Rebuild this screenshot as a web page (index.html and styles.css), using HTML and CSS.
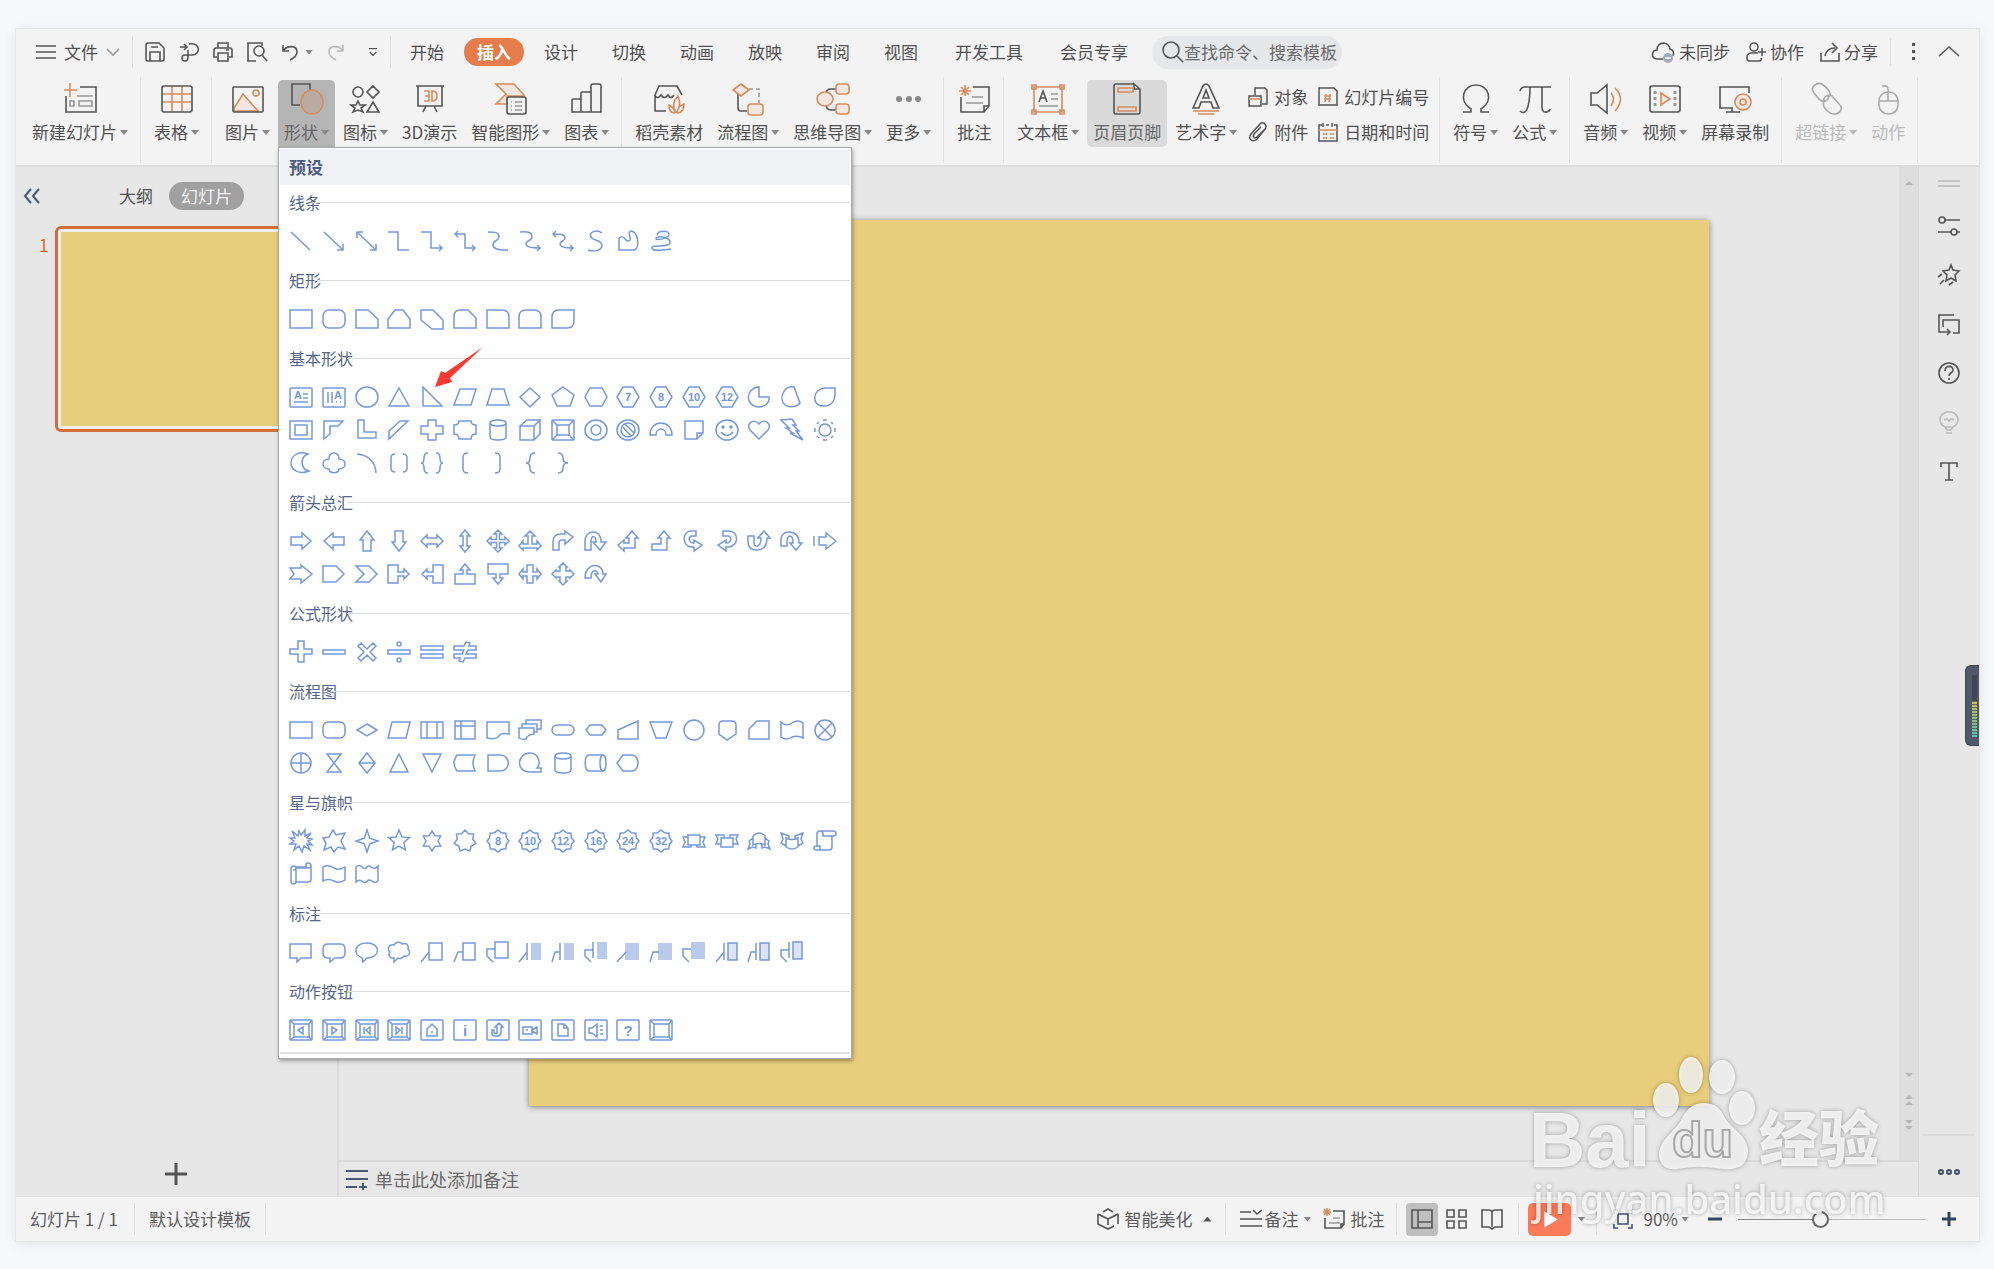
FILE: index.html
```html
<!DOCTYPE html>
<html lang="zh-CN">
<head>
<meta charset="utf-8">
<title>演示文稿</title>
<link rel="stylesheet" href="styles.css">
</head>
<body>
<div class="window">
  <header class="topbar">
    <div class="top-group file-group">
      <button class="plain file"><svg class="s20" viewBox="0 0 20 20"><path d="M0 4H20M0 10H20M0 16H20"/></svg>文件<svg class="chev" viewBox="0 0 14 10"><path d="M1 2L7 8L13 2"/></svg></button>
    </div>
    <div class="top-group quick">
      <button class="plain" aria-label="保存"><svg class="s20" viewBox="0 0 20 20"><path d="M1 3Q1 1 3 1H14L19 6V17Q19 19 17 19H3Q1 19 1 17ZM5 19V10H15V19M6 5H13"/></svg></button>
      <button class="plain" aria-label="输出"><svg class="s20" viewBox="0 0 20 20"><path d="M1 5H8M5 2L8 5L5 8M10 2C22 0 22 13 13 13H6C2 13 2 19 6 19C9 19 9 17 9 14V8"/></svg></button>
      <button class="plain" aria-label="打印"><svg class="s20" viewBox="0 0 20 20"><path d="M5 6V1H15V6M4 15H1V8Q1 6 3 6H17Q19 6 19 8V15H16M5 11H15V19H5ZM13 8H16"/></svg></button>
      <button class="plain" aria-label="打印预览"><svg class="s20" viewBox="0 0 20 20"><path d="M9 19H1V1H15V4M15 13L20 19"/><circle cx="12" cy="9" r="5"/></svg></button>
      <button class="plain undo" aria-label="撤销"><svg class="s18" viewBox="0 0 18 18"><path d="M2 2V8H8M2 8C6 2 16 2 16 9C16 13 13 15 9 17"/></svg><i class="caret"></i></button>
      <button class="plain faint" aria-label="恢复" disabled><svg class="s18" viewBox="0 0 18 18"><path d="M16 2V8H10M16 8C12 2 2 2 2 9C2 13 5 15 9 17"/></svg></button>
      <button class="plain more-quick" aria-label="自定义"><svg class="s10" viewBox="0 0 10 12"><path d="M0 2H10M1 6L5 10L9 6"/></svg></button>
    </div>
    <nav class="tabs">
      <button class="tab">开始</button><button class="tab active">插入</button><button class="tab">设计</button><button class="tab">切换</button><button class="tab">动画</button><button class="tab">放映</button><button class="tab">审阅</button><button class="tab">视图</button><button class="tab wide">开发工具</button><button class="tab wide">会员专享</button>
    </nav>
    <label class="search"><svg class="s22" viewBox="0 0 22 22"><circle cx="9" cy="9" r="8"/><path d="M15 15L21 21"/></svg><input type="text" placeholder="查找命令、搜索模板" aria-label="搜索"></label>
    <div class="account">
      <button class="plain"><svg class="s24" viewBox="0 0 24 24"><path d="M12 19H6C-1 18 1 10 6 10C6 1 18 1 19 9C23 10 23 14 22 16"/><circle cx="17" cy="18" r="5" fill="#a3aabb" stroke="none"/><path d="M14 18H20" stroke="#fff"/></svg>未同步</button>
      <button class="plain"><svg class="s20" viewBox="0 0 20 20"><circle cx="8" cy="5" r="4"/><path d="M12 11H5Q1 11 1 16Q1 19 3 19H13Q16 19 15 16M16 6V14M12 10H20"/></svg>协作</button>
      <button class="plain"><svg class="s20" viewBox="0 0 20 20"><path d="M1 11V19H19V11M5 14C6 8 10 6 15 6M12 1L17 6L12 11"/></svg>分享</button>
      <span class="bar"></span>
      <button class="plain dots-v" aria-label="更多"><svg class="s20" viewBox="0 0 20 20"><path class="ink" d="M9 1h3v3H9zM9 8h3v3H9zM9 15h3v3H9z"/></svg></button>
      <button class="plain" aria-label="折叠功能区"><svg class="s20" viewBox="0 0 20 20"><path d="M0 14L10 5L20 14"/></svg></button>
    </div>
  </header>

  <div class="ribbon">
    <div class="group g-first">
      <button class="tool"><svg viewBox="0 0 34 32"><path d="M17 4H33V29H3V13"/><path class="or" d="M7 0V14M1 7H14"/><path class="gr" d="M14 13H30M7 18H11V23H7ZM16 18H29V23H16Z"/></svg><span>新建幻灯片<i class="caret"></i></span></button>
    </div>
    <div class="group">
      <button class="tool"><svg viewBox="0 0 34 32"><path class="or" d="M12 3V29M22 3V29M2 11H32M2 19H32"/><rect x="2" y="3" width="30" height="26" rx="2"/></svg><span>表格<i class="caret"></i></span></button>
    </div>
    <div class="group">
      <button class="tool"><svg viewBox="0 0 34 32"><path class="orf" d="M3 28V25L12 11L27 28Z"/><circle class="or" cx="25" cy="10" r="3"/><rect x="2" y="4" width="30" height="25" rx="1"/></svg><span>图片<i class="caret"></i></span></button>
      <div class="menu-anchor">
        <button class="tool pressed" aria-expanded="true"><svg viewBox="0 0 34 32"><path d="M10 22H2V1H20V8"/><ellipse class="orf deep" cx="22" cy="19" rx="11" ry="12"/></svg><span>形状<i class="caret"></i></span></button>
        <div class="gallery" id="gallery">
          <h2>预设</h2>
          <svg class="pointer" viewBox="0 0 48 40"><path fill="#fb3a36" d="M48 0L15 31L17 35L0 40L6 24L10 26Z"/></svg>
        </div>
      </div>
      <button class="tool"><svg viewBox="0 0 34 32"><circle cx="9" cy="9" r="5"/><path d="M24 3L30 9L24 15L18 9ZM9 18L11 22L16 22L12 25L14 29L9 27L4 29L6 25L2 22L7 22ZM24 19L30 29H18Z"/></svg><span>图标<i class="caret"></i></span></button>
      <button class="tool"><svg viewBox="0 0 34 32"><path d="M3 3H31M5 3V23H29V3M13 23L10 29M21 23L24 29"/><path class="or" d="M11 8H16V18H11M12 13H16M19 8Q24 8 24 13Q24 18 19 18Z"/></svg><span>3D演示</span></button>
      <button class="tool"><svg viewBox="0 0 34 32"><path class="orf" d="M2 1H20L30 12V13H13V21H2L12 11Z"/><rect class="paper" x="13" y="14" width="19" height="17" rx="2"/><path class="gr" d="M17 19H18M21 19H28M17 23H18M21 23H28M17 27H18M21 27H28"/></svg><span>智能图形<i class="caret"></i></span></button>
      <button class="tool"><svg viewBox="0 0 34 32"><path d="M2 29V17Q2 16 3 16H11V29ZM11 29V10Q11 9 12 9H21V29ZM21 29V3Q21 1 23 1H29Q31 1 31 3V29Z"/></svg><span>图表<i class="caret"></i></span></button>
    </div>
    <div class="group">
      <button class="tool"><svg viewBox="0 0 34 32"><path d="M3 12L7 3H25L30 12M3 12V28H14M3 12Q5 17 9 12Q12 17 16 12Q19 17 22 12"/><path class="or" d="M24 30C19 22 22 17 26 13C29 20 28 25 24 30M23 30C18 30 17 26 17 22Q22 24 23 30M25 30Q26 23 32 21C32 27 30 30 25 30"/></svg><span>稻壳素材</span></button>
      <button class="tool"><svg viewBox="0 0 34 32"><path d="M7 11V25Q7 28 10 28H16"/><path class="gr" stroke-dasharray="4 3" d="M18 6H28V20"/><path class="orf" d="M10 1L18 7L10 13L2 7Z"/><rect class="orf" x="17" y="21" width="15" height="11" rx="3"/></svg><span>流程图<i class="caret"></i></span></button>
      <button class="tool"><svg viewBox="0 0 34 32"><path d="M20 6H15Q10 6 10 11M10 21Q10 27 15 27H20"/><ellipse class="orf" cx="9" cy="16" rx="8" ry="7"/><rect class="orf" x="20" y="1" width="13" height="10" rx="3"/><rect class="orf" x="20" y="21" width="13" height="10" rx="3"/></svg><span>思维导图<i class="caret"></i></span></button>
      <button class="tool"><svg viewBox="0 0 34 32"><g fill="#888" stroke="none"><circle cx="7" cy="16" r="3"/><circle cx="17" cy="16" r="3"/><circle cx="26" cy="16" r="3"/></g></svg><span>更多<i class="caret"></i></span></button>
    </div>
    <div class="group">
      <button class="tool"><svg viewBox="0 0 34 32"><path d="M16 4H32V23L27 29H4V14M32 23H27V29"/><path class="gr" d="M15 14H26M9 20H26"/><path class="or" d="M8 2V13M2 8H14M4 4L12 12M12 4L4 12"/></svg><span>批注</span></button>
    </div>
    <div class="group g-text">
      <button class="tool"><svg viewBox="0 0 34 32"><path class="or" d="M3 4H31V29H3ZM1 2H5V6H1ZM29 2H33V6H29ZM1 27H5V31H1ZM29 27H33V31H29Z"/><path d="M8 19L12 8L16 19M9 15H15"/><path class="gr" d="M20 11H27M20 16H27M8 23H27"/></svg><span>文本框<i class="caret"></i></span></button>
      <button class="tool hover"><svg viewBox="0 0 34 32"><path d="M24 1H6Q4 1 4 3V29Q4 31 6 31H28Q30 31 30 29V6L24 1V6H30"/><path class="or" d="M8 5H23V9H8ZM8 24H26V28H8Z"/></svg><span>页眉页脚</span></button>
      <button class="tool"><svg viewBox="0 0 34 32"><path d="M4 25L14 3Q17 -1 20 3L30 25H24L22 19H12L10 25ZM14 15L17 7L20 15Z"/><path class="or" d="M4 28H30M9 31H25"/></svg><span>艺术字<i class="caret"></i></span></button>
      <div class="minis">
        <button class="mini"><svg class="s20" viewBox="0 0 20 20"><path d="M7 8V1H17L19 3V17H14"/><path d="M1 9H13V19H1Z"/><path class="or" d="M1 12H13"/></svg>对象</button>
        <button class="mini"><svg class="s20" viewBox="0 0 20 20"><path d="M18 6L9 17C5 21 -1 17 3 12L12 2C15 -1 20 3 17 7L9 15C7 17 4 15 6 12L13 5"/></svg>附件</button>
      </div>
      <div class="minis later">
        <button class="mini"><svg class="s20" viewBox="0 0 20 20"><path d="M16 1H1V18H19V4Z"/><path class="or" d="M8 7L7 15M12 7L11 15M6 9H13M6 12H13"/></svg>幻灯片编号</button>
        <button class="mini"><svg class="s20" viewBox="0 0 20 20"><path d="M4 3H1V19H19V3H16M5 1V5M14 1V5M8 3H11"/><path class="or" d="M1 8H19M5 12H9M12 12H16M5 16H9M12 16H16"/></svg>日期和时间</button>
      </div>
    </div>
    <div class="group">
      <button class="tool"><svg viewBox="0 0 34 32"><path d="M4 29H12V26C-1 18 4 2 17 2C30 2 35 18 22 26V29H30"/></svg><span>符号<i class="caret"></i></span></button>
      <button class="tool"><svg viewBox="0 0 34 32"><path d="M2 8Q3 4 7 4H33M12 4Q12 22 8 28Q5 31 2 28M24 4V24Q24 30 29 29Q32 28 32 26"/></svg><span>公式<i class="caret"></i></span></button>
    </div>
    <div class="group">
      <button class="tool"><svg viewBox="0 0 34 32"><path d="M2 10H8L18 2V30L8 22H2Z"/><path class="or" d="M22 10Q27 16 22 23M26 5Q37 16 26 28"/></svg><span>音频<i class="caret"></i></span></button>
      <button class="tool"><svg viewBox="0 0 34 32"><rect x="2" y="3" width="30" height="26" rx="2"/><path stroke-dasharray="3 3" stroke-width="3" class="gr" d="M7 8V25M27 8V25"/><path class="orf" d="M13 10L22 16L13 22Z"/></svg><span>视频<i class="caret"></i></span></button>
      <button class="tool"><svg viewBox="0 0 34 32"><path d="M15 25H2V4H31V10M14 25V29M8 29H22"/><circle class="orf" cx="25" cy="19" r="8"/><circle class="or" cx="25" cy="19" r="3"/></svg><span>屏幕录制</span></button>
    </div>
    <div class="group">
      <button class="tool" disabled><svg viewBox="0 0 34 32"><path d="M15 19C12 23 20 31 25 31C31 31 35 25 30 21L24 14C21 10 14 13 15 18M20 14C24 10 17 4 13 1C9 -1 0 3 5 10L10 16C13 20 21 18 19 13"/></svg><span>超链接<i class="caret"></i></span></button>
      <button class="tool" disabled><svg viewBox="0 0 34 32"><rect x="8" y="9" width="19" height="22" rx="9"/><path d="M8 18H27M17 18V8Q18 2 11 3"/></svg><span>动作</span></button>
    </div>
  </div>

  <main class="work">
    <aside class="outline">
      <div class="outline-tabs">
        <button class="plain collapse" aria-label="收起"><svg class="s16" viewBox="0 0 16 16"><path d="M7 1L1 8L7 15M15 1L9 8L15 15"/></svg></button>
        <button class="plain">大纲</button>
        <button class="slides-tab">幻灯片</button>
      </div>
      <div class="thumb-row"><span class="num">1</span><button class="thumb" aria-label="幻灯片 1"></button></div>
      <button class="plain add" aria-label="新建幻灯片"><svg class="s22" viewBox="0 0 22 22"><path d="M11 0V22M0 11H22"/></svg></button>
    </aside>
    <section class="editor">
      <div class="stage"><div class="canvas"><div class="slide"></div></div>
        <div class="scroll">
          <svg class="s10" viewBox="0 0 10 10"><path d="M1 7L5 3L9 7Z"/></svg>
          <span class="grow"></span>
          <svg class="s10" viewBox="0 0 10 10"><path d="M1 3L5 7L9 3Z"/></svg>
          <svg class="s10" viewBox="0 0 10 10"><path d="M1 4L5 0L9 4ZM1 10L5 6L9 10Z"/></svg>
          <svg class="s10" viewBox="0 0 10 10"><path d="M1 0L5 4L9 0ZM1 6L5 10L9 6Z"/></svg>
        </div>
      </div>
      <label class="notes"><svg class="s22" viewBox="0 0 22 22"><path d="M0 3H22M0 11H22M0 19H11M17 15V22M13 19H21"/></svg><input type="text" placeholder="单击此处添加备注" aria-label="备注"></label>
    </section>
    <aside class="side">
      <svg class="s22 grip" viewBox="0 0 22 22"><path d="M0 8H22M0 13H22"/></svg>
      <button class="plain" aria-label="对象属性"><svg class="s22" viewBox="0 0 22 22"><circle cx="4" cy="5" r="3"/><circle cx="16" cy="17" r="3"/><path d="M7 5H22M0 17H13M19 17H22"/></svg></button>
      <button class="plain" aria-label="动画"><svg class="s22" viewBox="0 0 22 22"><path d="M13 1L15 6L21 7L17 11L18 17L13 14L8 17L9 11L5 7L11 6ZM0 13L4 10M2 20L6 16M11 21L15 18"/></svg></button>
      <button class="plain" aria-label="切换"><svg class="s22" viewBox="0 0 22 22"><path d="M16 2H1V19H12M9 16L12 19L9 22M5 14V7H21V20H15"/></svg></button>
      <button class="plain" aria-label="帮助"><svg class="s22" viewBox="0 0 22 22"><circle cx="11" cy="11" r="10"/><path d="M7 9C7 3 15 3 15 8C15 11 11 11 11 14M11 16V18"/></svg></button>
      <button class="plain faint" aria-label="提示"><svg class="s22" viewBox="0 0 22 22"><path d="M7 16Q2 13 2 9C2 -2 20 -2 20 9Q20 13 15 16L13 19H9ZM7 16H15M8 22H14M6 9L9 8L11 10L13 8L16 9"/></svg></button>
      <button class="plain" aria-label="文字"><svg class="s22" viewBox="0 0 22 22"><path d="M3 7V3H19V7M11 3V20M7 20H15"/></svg></button>
      <span class="grow"></span>
      <button class="plain side-more" aria-label="更多"><svg class="s24" viewBox="0 0 24 24"><circle cx="4" cy="12" r="2"/><circle cx="12" cy="12" r="2"/><circle cx="20" cy="12" r="2"/></svg></button>
    </aside>
  </main>

  <footer class="status">
    <span class="cell first">幻灯片 1 / 1</span>
    <span class="cell">默认设计模板</span>
    <span class="grow"></span>
    <button class="cell beautify"><svg class="s22" viewBox="0 0 22 22"><path d="M6 4L11 1L16 4M1 6L11 11L21 6M1 6V16L11 21L17 18M11 11V17M21 6V16"/></svg>智能美化<i class="caret up"></i></button>
    <div class="cell remarks">
      <button class="plain"><svg class="s22" viewBox="0 0 22 22"><path d="M0 4H11M0 11H22M0 18H22M13 2L17 6L22 2"/></svg>备注<i class="caret"></i></button>
      <button class="plain"><svg class="s22" viewBox="0 0 22 22"><path d="M10 3H21V16L18 20H2V10M21 16H18V20"/><path class="gr" d="M10 10H17M6 15H17"/><path class="or" d="M4 0V8M0 4H8M1 1L7 7M7 1L1 7"/></svg>批注</button>
    </div>
    <div class="cell views">
      <button class="view on" aria-label="普通视图"><svg class="s22" viewBox="0 0 22 22"><path d="M1 2H21V20H1ZM7 2V20M7 14H21"/></svg></button>
      <button class="view" aria-label="浏览视图"><svg class="s22" viewBox="0 0 22 22"><path d="M1 2H8V9H1ZM13 2H20V9H13ZM1 13H8V20H1ZM13 13H20V20H13Z"/></svg></button>
      <button class="view" aria-label="阅读视图"><svg class="s22" viewBox="0 0 22 22"><path d="M11 4Q10 2 8 2H1V19H8L11 21L14 19H21V2H14Q12 2 11 4V19"/></svg></button>
    </div>
    <div class="cell play"><button class="play-btn" aria-label="播放"><svg viewBox="0 0 42 32"><path fill="#fff" stroke="none" d="M16 8L29 16L16 24Z"/></svg></button><i class="caret"></i></div>
    <div class="zoom">
      <button class="plain" aria-label="适应窗口"><svg class="s20 navy" viewBox="0 0 20 20"><path d="M1 5V1H5M15 1H19V5M19 15V19H15M5 19H1V15M5 5H15V15H5Z"/></svg></button>
      <button class="plain pct">90%<i class="caret"></i></button>
      <button class="plain" aria-label="缩小"><svg class="s16 bold" viewBox="0 0 16 16"><path d="M1 8H15"/></svg></button>
      <input type="range" min="0" max="100" value="43" aria-label="缩放">
      <button class="plain" aria-label="放大"><svg class="s16 bold" viewBox="0 0 16 16"><path d="M1 8H15M8 1V15"/></svg></button>
    </div>
  </footer>

  <div class="meter"><span></span></div>
  <svg class="watermark" viewBox="0 0 370 180">
    <g fill="#fff" opacity=".8">
      <text class="wm-bai" x="4" y="117">Bai</text>
      <ellipse cx="141" cy="50" rx="13" ry="17"/><ellipse cx="166" cy="25" rx="12" ry="18"/><ellipse cx="197" cy="27" rx="13" ry="17"/><ellipse cx="217" cy="58" rx="13" ry="17"/>
      <path d="M178 53C166 53 160 62 155 72C149 82 134 90 134 105C135 117 143 120 152 119C162 118 170 116 178 117C188 117 196 120 206 119C218 118 223 111 223 100C222 86 207 79 200 68C195 58 190 53 178 53Z"/>
      <text class="wm-du" x="147" y="107">du</text>
      <text class="wm-cn" x="234" y="111">经验</text>
      <text class="wm-url" x="8" y="164">jingyan.baidu.com</text>
    </g>
  </svg>
</div>
<script src="shapes.js"></script>
</body>
</html>
```

FILE: styles.css
```css
* { box-sizing: border-box; }
body {
  margin: 0;
  padding: 29px 15px 28px 16px;
  min-height: 100vh;
  display: flex;
  background: #f7f8fa;
  font: 17px/24px "Noto Sans CJK SC", "Noto Sans", sans-serif;
  color: #505050;
}
button, input { font: inherit; color: inherit; margin: 0; }
button { border: 0; padding: 0; background: none; white-space: nowrap; }
svg { display: block; flex: none; fill: none; stroke: #555; stroke-width: 2; overflow: visible; }
.grow { flex: 1; }
.s10 { width: 10px; height: 10px; }
.s16 { width: 16px; height: 16px; }
.s18 { width: 18px; height: 18px; }
.s20 { width: 20px; height: 20px; }
.s22 { width: 22px; height: 22px; }
.s24 { width: 24px; height: 24px; }
.or { stroke: #d58d60; }
.orf { stroke: #d58d60; fill: #f1e6e0; }
.deep { fill: #b9aaa2; }
.gr { stroke: #999; }
.ink { fill: #555; stroke: none; }
.paper { fill: #f3f3f3; }
.caret {
  display: inline-block;
  width: 8px;
  height: 5px;
  margin-left: 3px;
  background: #888;
  clip-path: polygon(0 0, 100% 0, 50% 100%);
}
.caret.up { background: #555; clip-path: polygon(0 100%, 50% 0, 100% 100%); }
.plain { display: flex; align-items: center; }

.window {
  position: relative;
  flex: 1;
  min-width: 0;
  display: flex;
  flex-direction: column;
  background: #f3f3f3;
  box-shadow: 0 0 0 1px #e6e6e7, 0 2px 12px #0000001a;
}

/* Menu bar */
.topbar { display: flex; align-items: center; height: 48px; padding-bottom: 2px; }
.topbar svg { stroke-width: 1.6; }
.top-group { display: flex; align-items: center; height: 32px; border-right: 1px solid #dedede; }
.file-group { padding: 0 12px 0 20px; }
.file { gap: 8px; }
.chev { width: 14px; height: 10px; stroke: #999; }
.quick { gap: 14px; padding: 0 12px; }
.undo .caret { margin-left: 6px; }
.faint svg { stroke: #bbb; }
.more-quick { margin-left: 9px; }
.tabs { display: flex; gap: 6px; padding-left: 5px; }
.tab { height: 28px; padding: 0 14px; border-radius: 14px; }
.wide { margin-left: 3px; }
.tab.active { background: #e67c4b; color: #fff; font-weight: 700; padding: 0 13px; }
.search {
  display: flex;
  align-items: center;
  width: 190px;
  height: 33px;
  margin-left: 10px;
  padding: 0 4px 0 10px;
  border-radius: 17px;
  background: #e5e7e9;
}
.search input, .notes input { min-width: 0; flex: 1; border: 0; padding: 0; background: none; outline: 0; }
.search input::placeholder, .notes input::placeholder { color: #6a6a6a; opacity: 1; }
.account { display: flex; align-items: center; gap: 16px; margin-left: auto; padding-right: 20px; }
.account .plain { gap: 4px; }
.bar { width: 1px; height: 28px; margin: 0 -4px; background: #dedede; }

/* Ribbon */
.ribbon { display: flex; height: 90px; border-bottom: 2px solid #dcdcdc; }
.group { display: flex; gap: 2px; height: 86px; padding: 3px 6px 3px 7px; border-right: 1px solid #e2e2e2; }
.g-first { padding-left: 10px; }
.g-text { padding-right: 10px; }
.tool {
  display: flex;
  flex-direction: column;
  align-items: center;
  gap: 5px;
  height: 67px;
  padding: 3px 6px;
  border-radius: 5px;
}
.tool svg { width: 34px; height: 32px; stroke-width: 1.6; }
.tool .caret { margin-bottom: 4px; }
.pressed { background: #b5b5b5; color: #666; border-radius: 5px 5px 0 0; }
.hover { background: #dadada; color: #666; }
.tool:disabled { color: #bbb; }
.tool:disabled svg { stroke: #aaa; }
.tool:disabled .caret { background: #bbb; }
.minis { display: flex; flex-direction: column; gap: 11px; padding: 5px 0 0 3px; }
.minis.later { padding-left: 8px; }
.mini { display: flex; align-items: center; gap: 6px; }
.mini svg { stroke-width: 1.5; }

/* Shape gallery menu */
.menu-anchor { position: relative; }
.gallery {
  position: absolute;
  z-index: 5;
  top: 67px;
  left: 0;
  width: 574px;
  padding: 1px;
  background: #fff;
  border: 1px solid #aaa;
  box-shadow: 1px 2px 4px #0005;
  color: #566688;
}
.gallery h2 { margin: 0 0 5px; padding: 6px 9px; background: #f0f2f5; font-size: 17px; line-height: 24px; font-weight: 700; color: #4d5d80; }
.gallery h3 { display: flex; align-items: center; margin: 0; padding-left: 9px; font-size: 16px; line-height: 24px; font-weight: 400; }
.gallery h3::after { content: ""; flex: 1; height: 1px; margin-left: -6px; background: #dcdcdc; }
.shapes { display: grid; grid-template-columns: repeat(17, 1fr); margin: 10px 9px 11px 5px; }
.shapes button { display: flex; align-items: center; justify-content: center; height: 33px; }
.shapes svg { width: 24px; height: 24px; stroke: #7598db; stroke-width: 1.5; }
.shapes text { fill: #7598db; stroke: none; font: 700 11px "Liberation Sans", sans-serif; text-anchor: middle; }
.shapes text.big { font-size: 15px; }
.shapes .fill { fill: #b9caeb; stroke: none; }
.shapes .tint { fill: #dbe3f4; }
.gallery section:last-of-type { border-bottom: 2px solid #e0e0e0; margin-bottom: 3px; }
.gallery section:last-of-type .shapes { margin-bottom: 6px; }
.pointer { position: absolute; z-index: 1; left: 156px; top: 199px; width: 48px; height: 40px; stroke: none; }

/* Workspace */
.work { flex: 1; display: flex; background: #e7e7e7; min-height: 1029px; }
.outline { width: 323px; display: flex; flex-direction: column; border-right: 2px solid #dadada; }
.outline-tabs { display: flex; align-items: center; padding: 15px 0 16px 8px; }
.collapse { margin-right: 79px; }
.collapse svg { stroke: #4c5870; }
.slides-tab { margin-left: 16px; padding: 0 12px; height: 28px; border-radius: 14px; background: #a0a0a0; color: #f3f3f3; }
.thumb-row { display: flex; gap: 8px; padding-left: 23px; }
.num { width: 8px; padding-top: 7px; color: #dd6a2c; }
.thumb { width: 270px; height: 206px; border: 3px solid #d66d35; border-radius: 6px; background: #e8cd7a; box-shadow: inset 0 0 0 3px #eef0f4; }
.add { margin: auto auto 11px 149px; }
.add svg { stroke: #555; stroke-width: 3; }
.editor { flex: 1; display: flex; flex-direction: column; min-width: 0; }
.stage { flex: 1; display: flex; }
.canvas { flex: 1; padding-top: 53px; }
.slide { width: 75.6%; aspect-ratio: 1180 / 886; margin: 0 auto; background: #e8cd7a; box-shadow: 0 1px 6px #0007; }
.scroll { width: 19px; display: flex; flex-direction: column; align-items: center; gap: 15px; padding: 11px 0 30px; background: #dedede; }
.scroll svg { fill: #b5b5b5; stroke: none; }
.notes { display: flex; align-items: center; gap: 7px; height: 36px; padding-left: 7px; border-top: 2px solid #dadada; font-size: 18px; }
.notes svg { stroke: #4c5870; }
.side { width: 61px; display: flex; flex-direction: column; align-items: center; gap: 27px; padding-top: 6px; border-left: 1px solid #d8d8d8; }
.side svg { stroke-width: 1.6; }
.side .grip { stroke: #c4c4c4; stroke-width: 2; margin-bottom: -7px; }
.side-more { width: 52px; height: 62px; justify-content: center; border-top: 2px solid #dcdcdc; padding-top: 12px; }
.side .side-more svg { stroke: #44506a; stroke-width: 2; }

/* Status bar */
.status { display: flex; align-items: center; height: 45px; border-top: 1px solid #e2e2e2; color: #5c5c5c; }
.cell { display: flex; align-items: center; height: 32px; padding: 0 14px; border-right: 1px solid #dedede; }
.status svg { stroke-width: 1.6; }
.first { width: 119px; }
button.cell { border-right: 1px solid #dedede; gap: 5px; }
.beautify .caret { margin-left: 6px; }
.remarks { gap: 12px; padding-right: 12px; }
.remarks .plain { gap: 2px; }
.remarks .plain + .plain { gap: 5px; }
.views { gap: 3px; padding: 0 10px 0 9px; }
.view { width: 32px; height: 33px; display: flex; align-items: center; justify-content: center; border-radius: 4px; }
.view.on { background: #bfbfbf; }
.play { gap: 3px; padding: 0 11px 0 9px; }
.play-btn { width: 43px; height: 33px; border-radius: 5px; background: #fb7a59; }
.zoom { display: flex; align-items: center; gap: 15px; padding: 0 22px 0 16px; }
.pct { margin: 0 3px 0 -5px; }
.navy { stroke: #44506a; }
.status .bold { stroke: #35425f; stroke-width: 3; }
input[type="range"] { width: 188px; height: 18px; appearance: none; background: linear-gradient(90deg, #888 43%, #bbb 43%) center / 100% 1px no-repeat; }
input[type="range"]::-webkit-slider-thumb { appearance: none; width: 17px; height: 17px; border: 2px solid #666; border-radius: 50%; background: #f3f3f3; }

/* Floating level meter */
.meter { position: absolute; right: 0; top: 636px; width: 14px; height: 81px; padding: 9px 2px 9px 6px; border-radius: 6px 0 0 6px; background: #525868; border: 1px solid #41454f; border-right: 0; }
.meter span { display: block; height: 62px; background: repeating-linear-gradient(180deg, #0000 0 2px, #41454faa 2px 3px), linear-gradient(180deg, #41454f 42%, #c9bf52 42%, #8fbf72 70%, #52c2b4); }

.watermark { position: absolute; right: 84px; bottom: 11px; width: 370px; height: 180px; stroke: none; filter: drop-shadow(0 0 2px #0006); pointer-events: none; }
.wm-bai { font: 700 78px "Liberation Sans", sans-serif; }
.wm-du { font: 700 50px "Liberation Sans", sans-serif; fill: #fff; stroke: #aaa; stroke-width: 2; }
.wm-cn { font: 900 60px "Noto Sans CJK SC", sans-serif; }
.wm-url { font: 500 40px "Noto Sans", sans-serif; }
```

FILE: shapes.js
```js
// Builds the shape gallery. An entry is either path data or ready SVG markup.
function star(n, outer, inner, turn = 0) {
  let d = "";
  for (let i = 0; i < n * 2; i++) {
    const a = (Math.PI * i) / n - Math.PI / 2 + turn;
    const r = i % 2 ? inner : outer;
    d += (i ? "L" : "M") + (12 + r * Math.cos(a)).toFixed(1) + " " + (12 + r * Math.sin(a)).toFixed(1);
  }
  return d + "Z";
}
const p = (d, cls = "") => `<path class="${cls}" d="${d}"/>`;
const c = (x, y, rx, ry = rx) => `<ellipse cx="${x}" cy="${y}" rx="${rx}" ry="${ry}"/>`;
const r = (x, y, w, h, rx = 0, cls = "") => `<rect class="${cls}" x="${x}" y="${y}" width="${w}" height="${h}" rx="${rx}"/>`;
const t = (s, y = 16) => `<text x="12" y="${y}">${s}</text>`;
const hex = p("M7 2H17L23 12L17 22H7L1 12Z");
const badge = (s) => p(star(8, 11, 9)) + t(s);
const bevel = r(1, 2, 22, 20, 1) + r(5, 6, 15, 13) + p("M1 2L5 6M23 2L20 6M23 22L20 19M1 22L5 19");
const frame = r(1, 2, 22, 20, 1);

const sections = [
  ["线条", ["M2 3L21 21", "M2 3L21 21M21 15V21H15", "M2 3L21 21M21 15V21H15M2 9V3H8", "M1 3H11V21H22",
    "M1 3H11V19H22M19 16L22 19L19 22", "M2 5H12V19H22M5 2L2 5L5 8M19 16L22 19L19 22",
    "M2 3C9 3 13 3 13 8C13 12 7 11 7 16C7 20 12 21 22 21",
    "M2 3C9 2 14 3 14 8C14 12 8 11 8 15C8 18 12 19 22 19M19 16L22 19L19 22",
    "M2 5C10 5 14 5 14 9C14 12 9 12 9 15C9 18 13 19 22 19M5 2L2 5L5 8M19 16L22 19L19 22",
    "M18 4C13 0 4 3 7 8C9 12 19 11 18 17C17 22 9 23 4 21",
    "M3 9V21H19C24 17 22 3 15 2C10 3 18 12 12 12C8 12 9 5 3 9",
    "M8 6C9 1 21 1 20 6C18 10 6 12 7 9C11 6 22 9 21 14C20 19 2 15 3 19C4 23 15 21 22 20"]],
  ["矩形", ["M1 3H23V21H1Z", r(1, 3, 22, 18, 6), "M1 3H13L23 12V21H1Z", "M8 3H16L23 12V21H1V12Z",
    "M1 3H13L23 13V22H12L1 13Z", "M7 3H15L23 11V21H1V10Q1 3 7 3Z", "M1 3H16Q23 3 23 10V21H1Z",
    "M8 3H16Q23 3 23 10V21H1V10Q1 3 8 3Z", "M8 3H23V14Q23 21 16 21H1V10Q1 3 8 3Z"]],
  ["基本形状", [
    r(1, 3, 22, 19, 1) + '<text x="9" y="14">A</text>' + p("M14 9H19M14 13H19M5 17H19"),
    r(1, 3, 22, 19, 1) + '<text x="16" y="14">A</text>' + p("M6 7V18M10 7V18M14 17H15M18 17H19"),
    c(12, 12, 11, 10), "M12 3L22 21H2Z", "M3 2V21H22Z", "M7 4H23L18 20H1Z", "M6 4H18L23 20H1Z",
    "M12 3L22 12L12 22L2 12Z", "M12 2L23 10L19 21H6L1 10Z", "M6 3H18L23 12L18 21H6L1 12Z",
    hex + t(7), hex + t(8), hex + t(10), hex + t(12),
    "M12 2C-2 3 -2 21 11 22C18 22 23 18 22 12H12Z", "M14 2C4 0 -2 14 5 20C9 23 17 22 20 18Z",
    "M22 3H13C-1 3 -2 21 10 21C19 22 22 14 22 10Z",
    r(1, 3, 22, 18) + r(6, 7, 12, 10), "M2 3H21L16 8H8V16L2 21Z", "M3 2H9V14H21V20H3Z", "M2 21V13L13 3H21Z",
    "M8 2H16V8H23V16H16V22H8V16H1V8H8Z", "M6 3H18Q18 7 23 7V16Q18 16 18 21H6Q6 16 1 16V7Q6 7 6 3Z",
    c(12, 5, 8, 3) + p("M4 5V19C4 23 20 23 20 19V5"), "M2 8H16V22H2ZM2 8L9 2H22L16 8M22 2V16L16 22",
    r(1, 2, 22, 20, 1) + r(6, 7, 12, 10) + p("M1 2L6 7M23 2L18 7M23 22L18 17M1 22L6 17"),
    c(12, 12, 11, 10) + c(12, 12, 5), c(12, 12, 11, 10) + c(12, 12, 7) + p("M7 9L15 18M9 6L18 15"),
    "M1 17C1 1 23 1 23 17H17C17 9 7 9 7 17Z", "M3 3H21V15L15 21H3ZM21 15H15V21",
    c(12, 12, 11, 10) + c(8, 9, 1) + c(16, 9, 1) + p("M6 14Q12 21 18 14"),
    "M12 21L3 12C-2 5 8 0 12 6C16 0 26 5 21 12Z", "M1 2L12 1L16 7H13L19 13H16L23 22L10 15H13L6 10H9Z",
    c(12, 12, 6) + p("M10 2H14M10 22H14M2 10V14M22 10V14M4 6L6 4M20 6L18 4M4 18L6 20M20 18L18 20"),
    "M19 3C8 -1 2 6 2 12C2 19 10 24 20 20C11 18 11 6 19 3Z",
    "M7 8C6 0 18 0 17 8C25 8 25 18 17 18C16 23 8 23 7 18C-1 18 -1 8 7 8Z", "M2 3Q20 5 21 22",
    "M8 3Q4 3 4 7V17Q4 21 8 21M16 3Q20 3 20 7V17Q20 21 16 21",
    "M8 2Q4 2 4 7Q4 12 1 12Q4 12 4 17Q4 22 8 22M16 2Q20 2 20 7Q20 12 23 12Q20 12 20 17Q20 22 16 22",
    "M15 2Q10 2 10 6V18Q10 22 15 22", "M9 2Q14 2 14 6V18Q14 22 9 22",
    "M17 2Q12 2 12 7Q12 12 8 12Q12 12 12 17Q12 22 17 22", "M7 2Q12 2 12 7Q12 12 17 12Q12 12 12 17Q12 22 7 22"]],
  ["箭头总汇", [
    "M2 8H13V4L22 12L13 20V16H2Z", "M22 8H11V4L2 12L11 20V16H22Z", "M8 22V11H5L12 2L19 11H16V22Z", "M8 2V13H5L12 22L19 13H16V2Z",
    "M1 12L7 6V9H17V6L23 12L17 18V15H7V18Z", "M12 1L17 7H14V17H17L12 23L7 17H10V7H7Z",
    "M12 1L16 5H13.5V10.5H19V8L23 12L19 16V13.5H13.5V19H16L12 23L8 19H10.5V13.5H5V16L1 12L5 8V10.5H10.5V5H8Z",
    "M12 2L17 7H14V15H19V12L23 17L19 21V19H5V21L1 17L5 12V15H10V7H7Z",
    "M2 21V13Q2 5 10 5H14V2L22 8L14 15V11H11Q8 11 8 14V21Z",
    "M1 21V12C1 0 17 0 17 12V13H22L16 21L9 13H12C12 6 7 6 7 12V21Z",
    "M16 2L22 9H19V19H8V22L2 16L8 11V14H13V9H10Z", "M15 2L21 9H18V21H3V15H12V9H9Z",
    "M14 2H9C0 2 0 17 9 18H12V22L20 16L12 11V14C6 14 6 7 10 7H14Z", "M8 2H14C24 2 24 17 14 18H11V22L3 16L11 11V14C17 14 17 7 13 7H8Z",
    "M1 7H7V14Q8 18 11 17Q14 15 14 9H11L17 2L23 9H20Q20 21 10 21Q1 21 1 13Z", "M1 17V10Q2 3 9 3Q19 3 19 14H22L16 21L10 14H13Q13 7 10 7Q7 8 7 12V17Z",
    "M1 7V17M6 8H13V4L23 12L13 20V16H6Z",
    "M1 6H12V3L23 12L12 21V17H1L5 12Z", "M1 4H14L22 12L14 20H1Z", "M1 4H14L22 12L14 20H1L9 12Z",
    "M1 3H11V10H17V7L22 12L17 17V14H11V21H1Z", "M23 3H13V10H7V7L2 12L7 17V14H13V21H23Z",
    "M2 22V12H10V8H7L12 2L17 8H14V12H22V22Z", "M2 2V12H10V16H7L12 22L17 16H14V12H22V2Z",
    "M9 3H15V10H19V7L23 12L19 17V14H15V21H9V14H5V17L1 12L5 7V10H9Z",
    "M12 1L16 5H15V9H19V8L23 12L19 16V15H15V19H16L12 23L8 19H9V15H5V16L1 12L5 8V9H9V5H8Z",
    "M1 16C1 0 19 0 19 12H22L17 20L11 12H14C13 7 7 7 7 16Z"]],
  ["公式形状", ["M9 1H15V9H23V14H15V22H9V14H1V9H9Z", "M1 10H23V14H1Z", "M6 3L12 9L18 3L21 6L15 12L21 18L18 21L12 15L6 21L3 18L9 12L3 6Z",
    p("M1 10H23V14H1Z") + c(12, 4, 2) + c(12, 20, 2), "M1 6H23V10H1ZM1 14H23V18H1Z",
    "M1 6H11L13 2L17 3L16 6H23V10H15L13 14H23V18H12L10 22L6 21L7 18H1V14H9L11 10H1Z"]],
  ["流程图", [r(1, 4, 22, 16), r(1, 4, 22, 16, 5), "M12 6L22 12L12 18L2 12Z", "M5 4H23L19 20H1Z",
    "M1 4H23V20H1ZM7 4V20M17 4V20", "M2 3H22V21H2ZM2 8H22M8 3V21", "M1 4H23V16Q15 14 12 19Q8 22 1 20Z",
    "M1 10H16V16Q9 17 8 21Q4 22 1 20ZM4 10V6H19V14H16M8 6V2H23V11H19",
    r(1, 7, 22, 10, 5), "M6 7H18L22 12L18 17H6L2 12Z", "M2 12L22 3V21H2Z", "M1 4H23L17 20H7Z", c(12, 12, 10, 10),
    "M8 3H17Q21 3 21 7V16L12 22L4 16V7Q4 3 8 3Z", "M10 3H22V21H2V11Z", "M1 4Q6 9 12 5Q18 1 23 5V20Q18 17 12 19Q6 23 1 19Z",
    c(12, 12, 10, 10) + p("M5 5L19 19M19 5L5 19"),
    c(12, 12, 10, 10) + p("M12 2V22M2 12H22"), "M5 3H19L5 21H19Z", "M12 2L20 12L12 22L4 12ZM4 12H20", "M12 3L21 21H3Z", "M12 21L21 3H3Z",
    "M4 4H22Q18 12 22 20H4Q-2 12 4 4Z", "M2 4H14C25 4 25 20 14 20H2Z", "M22 21H12C-3 21 -1 2 12 2C21 2 23 13 19 17H23V21Z",
    c(12, 5, 8, 3) + p("M4 5V19C4 23 20 23 20 19V5"), c(19, 12, 3, 8) + p("M19 4H5C0 4 0 20 5 20H19"), "M7 4H16C24 4 24 20 16 20H7L1 12Z"]],
  ["星与旗帜", [
    "M12 6L16 1V7L22 4L18 9L23 10L19 12L23 16L18 15L21 21L15 17L13 23L10 17L5 21L7 15L1 15L5 12L1 9L6 9L3 2L9 7L10 2Z",
    "M11 1L14 6L23 4L19 12L23 20L16 18L12 23L9 18L2 21L4 14L1 9L7 8Z",
    star(4, 11, 4), star(5, 11, 5), star(6, 10, 6), star(7, 11, 8), badge(8), badge(10), badge(12), badge(16), badge(24), badge(32),
    "M6 6H18V16H6ZM6 8H1L3 13L1 18H9V16M18 8H23L21 13L23 18H15V16",
    "M6 9H18V18H6ZM6 15H1L3 10L1 6H9V9M18 15H23L21 10L23 6H15V9",
    "M6 16V7Q12 1 18 7V16Q12 13 6 16ZM6 9L2 12L3 15L1 20Q6 17 9 19V15M18 9L22 12L21 15L23 20Q18 17 15 19V15",
    "M6 9V18Q12 22 18 18V9Q12 12 6 9ZM6 17L1 14L3 10L1 4L9 7V10M18 17L23 14L21 10L23 4L15 7V10",
    "M7 2H20Q23 2 23 5Q23 7 20 7H10V5Q10 2 7 2Q4 2 4 5V18M19 7V18Q19 21 16 21H4Q1 21 1 19Q1 17 4 17H7V21",
    "M7 5H17V3Q17 1 19 1Q22 1 22 4Q22 6 19 6H7M22 4V17Q22 20 19 20H7M7 5V19Q7 22 4 22Q2 22 2 19V7Q2 4 5 4Q7 4 7 6Q7 8 4 8",
    "M1 5Q6 2 12 6Q17 9 23 5V18Q17 22 12 19Q6 16 1 19Z",
    "M1 5Q4 2 7 5Q10 8 12 5Q14 3 16 5Q20 8 23 4V19Q20 22 17 19Q14 17 12 19Q10 22 7 19Q4 17 1 20Z"]],
  ["标注", ["M1 4H22V18H12L8 22V18H1Z", "M6 4H18Q23 4 23 9V13Q23 18 18 18H13L8 22V18H6Q1 18 1 13V9Q1 4 6 4Z",
    "M8 22L7 18C-4 13 1 3 12 3C25 3 27 17 12 18Z", "M7 22V18C2 19 1 14 3 12C-1 8 3 4 7 5C9 1 14 2 15 4C20 2 22 6 21 9C25 13 21 17 17 16C15 19 12 19 11 18Z",
    "M9 3H22V20H9ZM9 12L1 22", "M10 3H22V20H10ZM10 12H5L1 22", "M9 2H22V18H9ZM9 9H1V16L7 22",
    p("M9 3V20M9 12L1 22") + r(13, 3, 10, 17, 0, "fill"), p("M9 3V20M9 12H4L1 22") + r(13, 3, 10, 17, 0, "fill"), p("M9 2V18M9 10H1V16L7 22") + r(13, 2, 10, 17, 0, "fill"),
    r(9, 3, 14, 17, 0, "fill") + p("M10 12L1 22"), r(9, 3, 14, 17, 0, "fill") + p("M10 12H4L1 22"), r(9, 2, 14, 17, 0, "fill") + p("M9 9H1V16L7 22"),
    p("M9 3V20M9 12L1 22") + r(13, 3, 9, 17, 0, "tint"), p("M9 3V20M9 12H4L1 22") + r(13, 3, 9, 17, 0, "tint"), p("M9 2V18M9 10H1V16L7 22") + r(13, 2, 9, 17, 0, "tint")]],
  ["动作按钮", [bevel + p("M14 9V16L9 12Z"), bevel + p("M10 9V16L15 12Z"), bevel + p("M9 9V16M15 9V16L11 12Z"), bevel + p("M15 9V16M9 9V16L13 12Z"),
    frame + p("M7 18V11L12 6L17 11V18ZM12 13V15"), frame + '<text class="big" x="12" y="18">i</text>',
    frame + p("M6 12H8V15Q9 16 11 15V9H9L13 5L17 9H15V15Q14 19 9 18Q6 18 6 15Z"), frame + p("M5 9H14V16H5ZM14 12L19 9V16L14 13M8 12H10"),
    frame + p("M7 6H13L17 10V18H7ZM13 6V10H17"), frame + p("M5 10H8L13 6V19L8 15H5ZM16 8H19M16 12H19M16 16H19"),
    frame + '<text class="big" x="12" y="18">?</text>', bevel]],
];

const gallery = document.getElementById("gallery");
for (const [title, items] of sections) {
  const section = document.createElement("section");
  section.innerHTML = `<h3>${title}</h3><div class="shapes">` + items.map((s, i) =>
    `<button aria-label="${title} ${i + 1}"><svg viewBox="0 0 24 24">${s[0] === "<" ? s : p(s)}</svg></button>`).join("") + "</div>";
  gallery.append(section);
}
```
